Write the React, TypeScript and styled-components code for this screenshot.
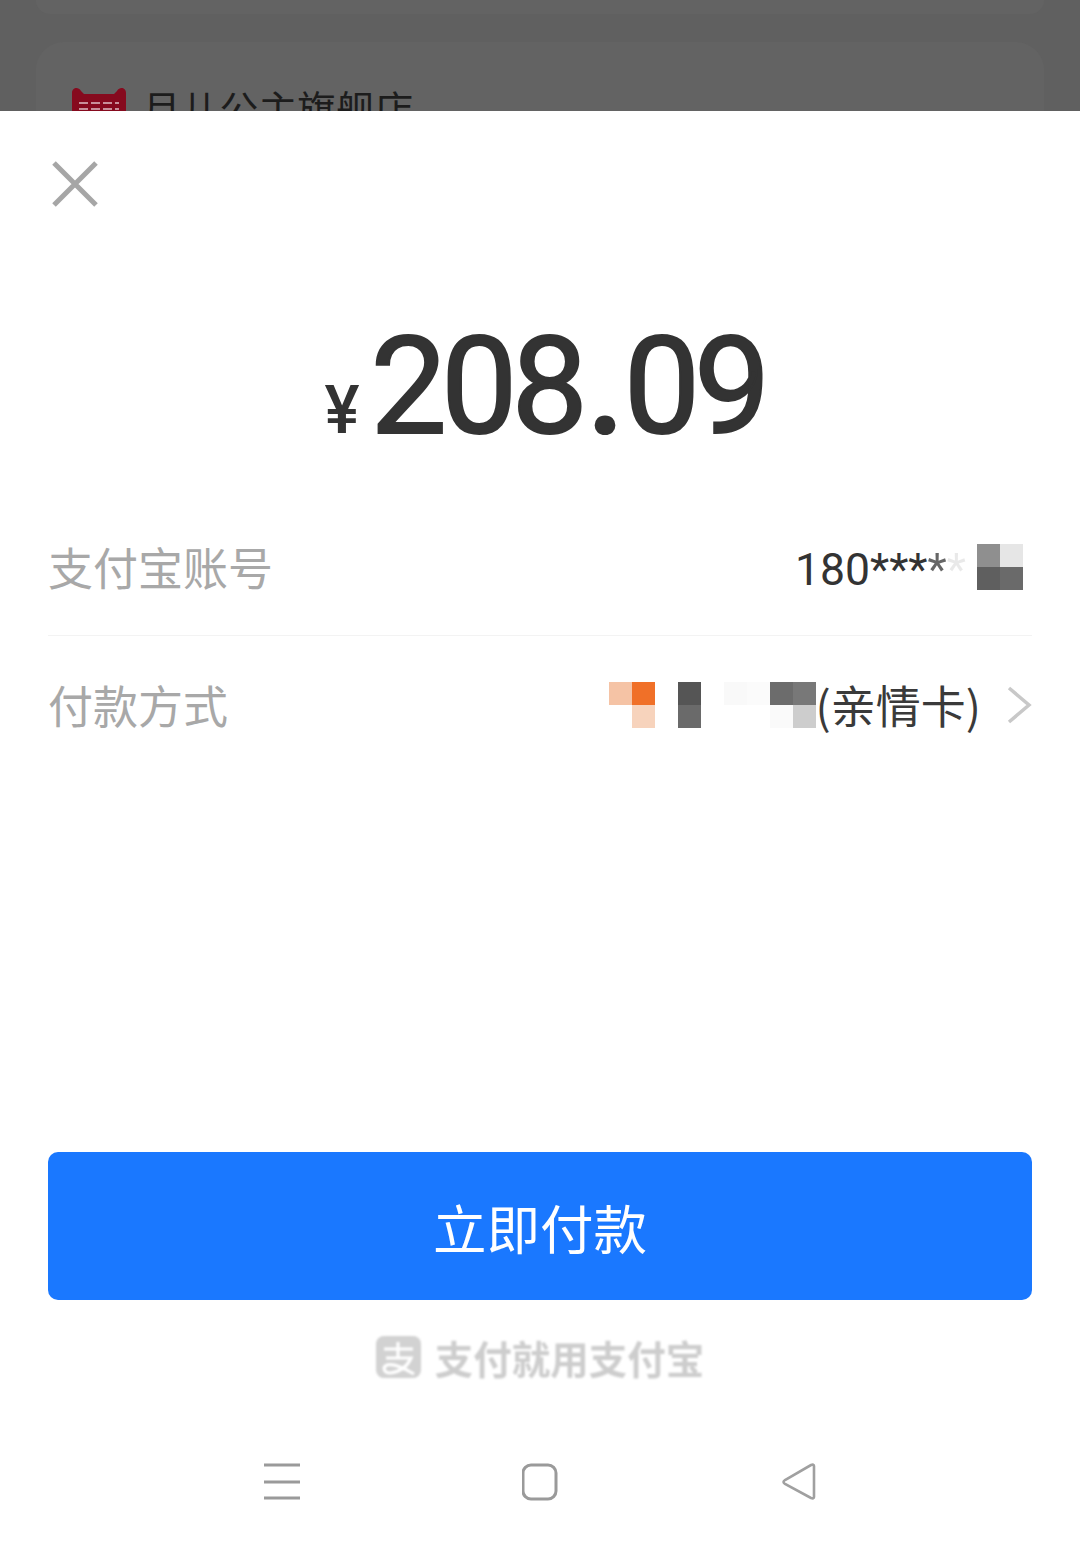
import styled, { createGlobalStyle } from "styled-components";

const LOGO_STROKE = "M8 13h29M22 6v16M10 22h25c-4 9-12 14-21 15c-6 0-8-6-3-8c7-2 17 3 27 9";

const accountMosaic = ["#8f8f8f", "#e6e6e6", "#5f5f5f", "#6a6a6a"];

const methodMosaic = [
  "#f5c3a5", "#f07028", "transparent", "#555555", "transparent", "#f9f9f9", "#fbfbfb", "#6c6c6c", "#787878",
  "transparent", "#f7d3bc", "transparent", "#6a6a6a", "transparent", "transparent", "transparent", "#fafafa", "#cdcdcd",
];

export default function App() {
  return (
    <Page>
      <GlobalStyle />
      <Backdrop>
        <TopCard />
        <ShopCard>
          <ShopLogo viewBox="0 0 54 40">
            <path d="M0 6c0-5 6-7 9-2l3 3h30l3-3c3-5 9-3 9 2v34H0z" fill="#860a1e" />
            <path d="M7 16h40M7 22h40" stroke="#c8909a" strokeWidth="2" strokeDasharray="9 3" />
          </ShopLogo>
          <ShopName>月儿公主旗舰店</ShopName>
        </ShopCard>
      </Backdrop>

      <Sheet>
        <CloseButton viewBox="0 0 46 46">
          <path d="M2 2l42 42M44 2L2 44" stroke="#a6a6a6" strokeWidth="5" fill="none" />
        </CloseButton>

        <Amount>
          <Currency>¥</Currency>
          <Digits>
            208<Dot>.</Dot>09
          </Digits>
        </Amount>

        <Row>
          <Label>支付宝账号</Label>
          <Value>
            <Phone>
              180***<FadedStar $level={0.75}>*</FadedStar>
              <FadedStar $level={0.1}>*</FadedStar>
            </Phone>
            <Mosaic $columns={2}>
              {accountMosaic.map((color, i) => (
                <MosaicCell key={i} $color={color} />
              ))}
            </Mosaic>
          </Value>
        </Row>
        <Divider />
        <Row $second>
          <Label>付款方式</Label>
          <Value>
            <Mosaic $columns={9}>
              {methodMosaic.map((color, i) => (
                <MosaicCell key={i} $color={color} />
              ))}
            </Mosaic>
            <CardType>(亲情卡)</CardType>
            <Chevron viewBox="0 0 26 40">
              <path d="M3 3l20 17L3 37" stroke="#c8c8c8" strokeWidth="3.5" fill="none" />
            </Chevron>
          </Value>
        </Row>

        <Spacer />

        <PayButton>立即付款</PayButton>

        <Brand>
          <BrandLogo viewBox="0 0 45 42">
            <rect width="45" height="42" rx="8" fill="#d2d2d2" />
            <path d={LOGO_STROKE} stroke="#fff" strokeWidth="3.2" fill="none" />
          </BrandLogo>
          <BrandText>支付就用支付宝</BrandText>
        </Brand>

        <NavBar>
          <NavIcon viewBox="0 0 38 38">
            <path d="M1 2h36M1 19h36M1 35h36" stroke="#9a9a9a" strokeWidth="3" fill="none" />
          </NavIcon>
          <NavIcon viewBox="0 0 38 38">
            <rect x="1" y="2" width="33" height="34" rx="8" stroke="#9a9a9a" strokeWidth="3" fill="none" />
          </NavIcon>
          <NavIcon viewBox="0 0 38 38">
            <path d="M34 3v31q0 2-3 1L5 21q-3-2 0-4L31 2q3-1 3 1z" stroke="#a0a0a0" strokeWidth="2.6" fill="none" />
          </NavIcon>
        </NavBar>
      </Sheet>
    </Page>
  );
}

const GlobalStyle = createGlobalStyle`
  html, body {
    margin: 0;
    padding: 0;
    background: #fff;
  }
  * {
    box-sizing: border-box;
  }
`;

const Page = styled.div`
  width: 1080px;
  height: 1548px;
  display: flex;
  flex-direction: column;
  overflow: hidden;
  font-family: "Noto Sans CJK SC", "Noto Sans", sans-serif;
`;

const Backdrop = styled.div`
  height: 111px;
  flex: none;
  overflow: hidden;
  background: #606060;
  padding: 0 36px;
`;

const TopCard = styled.div`
  height: 14px;
  margin-bottom: 28px;
  background: #636363;
  border-radius: 0 0 28px 28px;
`;

const ShopCard = styled.div`
  height: 120px;
  background: #636363;
  border-radius: 28px;
  padding: 45px 36px 0;
  display: flex;
  align-items: flex-start;
  gap: 16px;
`;

const ShopLogo = styled.svg`
  width: 54px;
  height: 40px;
  flex: none;
`;

const ShopName = styled.div`
  margin-top: -2px;
  font-size: 38.8px;
  line-height: 44px;
  font-weight: 400;
  color: #1c1c1c;
  white-space: nowrap;
`;

const Sheet = styled.div`
  flex: 1;
  display: flex;
  flex-direction: column;
  background: #fff;
  padding: 0 48px;
`;

const CloseButton = styled.svg`
  width: 46px;
  height: 46px;
  margin: 50px 0 0 4px;
  flex: none;
`;

const Amount = styled.div`
  height: 160px;
  margin-top: 100px;
  padding-left: 9px;
  display: flex;
  justify-content: center;
  align-items: baseline;
  color: #333333;
  font-family: Roboto, "Liberation Sans", sans-serif;
`;

const Currency = styled.span`
  font-size: 66px;
  font-weight: 500;
  margin-right: 11px;
  font-family: Roboto, "Noto Sans", sans-serif;
`;

const Digits = styled.span`
  font-size: 136px;
  line-height: 160px;
  font-weight: 400;
  letter-spacing: -6px;
  -webkit-text-stroke: 2px #333333;
`;

const Dot = styled.span`
  margin: 0 5px;
  font-weight: 500;
`;

const Row = styled.div<{ $second?: boolean }>`
  height: ${(p) => (p.$second ? "142px" : "136px")};
  margin-top: ${(p) => (p.$second ? "0" : "32px")};
  display: flex;
  justify-content: space-between;
  align-items: ${(p) => (p.$second ? "flex-start" : "center")};
  padding-top: ${(p) => (p.$second ? "46px" : "0")};
`;

const Label = styled.div`
  font-size: 45px;
  line-height: 46px;
  font-weight: 400;
  color: #a8a8a8;
`;

const Value = styled.div`
  display: flex;
  align-items: center;
  color: #333333;
`;

const Phone = styled.div`
  width: 182px;
  padding-top: 6px;
  font-family: Roboto, "Liberation Sans", sans-serif;
  font-size: 44.5px;
  line-height: 46px;
  font-weight: 400;
  white-space: nowrap;
`;

const FadedStar = styled.span<{ $level: number }>`
  opacity: ${(p) => p.$level};
`;

const Mosaic = styled.div<{ $columns: number }>`
  display: grid;
  grid-template-columns: repeat(${(p) => p.$columns}, 23px);
  grid-auto-rows: 23px;
  margin-right: 9px;
`;

const MosaicCell = styled.div<{ $color: string }>`
  background: ${(p) => p.$color};
`;

const CardType = styled.div`
  margin-left: -9.5px;
  font-size: 45px;
  line-height: 46px;
  font-weight: 400;
  color: #3a3a3a;
  white-space: nowrap;
`;

const Chevron = styled.svg`
  width: 26px;
  height: 40px;
  margin-left: 25px;
  flex: none;
`;

const Divider = styled.div`
  height: 1px;
  background: #f3f3f3;
`;

const Spacer = styled.div`
  flex: 1;
`;

const PayButton = styled.div`
  height: 148px;
  flex: none;
  display: flex;
  align-items: center;
  justify-content: center;
  background: #1a78ff;
  border-radius: 10px;
  color: #fff;
  font-size: 53.5px;
  font-weight: 400;
`;

const Brand = styled.div`
  margin-top: 35px;
  height: 44px;
  display: flex;
  justify-content: center;
  align-items: center;
  gap: 14px;
  filter: blur(1px);
`;

const BrandLogo = styled.svg`
  width: 45px;
  height: 42px;
  flex: none;
`;

const BrandText = styled.div`
  font-size: 38.5px;
  line-height: 44px;
  font-weight: 700;
  color: #cdcdcd;
  white-space: nowrap;
`;

const NavBar = styled.div`
  height: 169px;
  flex: none;
  padding: 84px 214px 0 215px;
  display: flex;
  justify-content: space-between;
  align-items: flex-start;
`;

const NavIcon = styled.svg`
  width: 38px;
  height: 38px;
  flex: none;
`;
